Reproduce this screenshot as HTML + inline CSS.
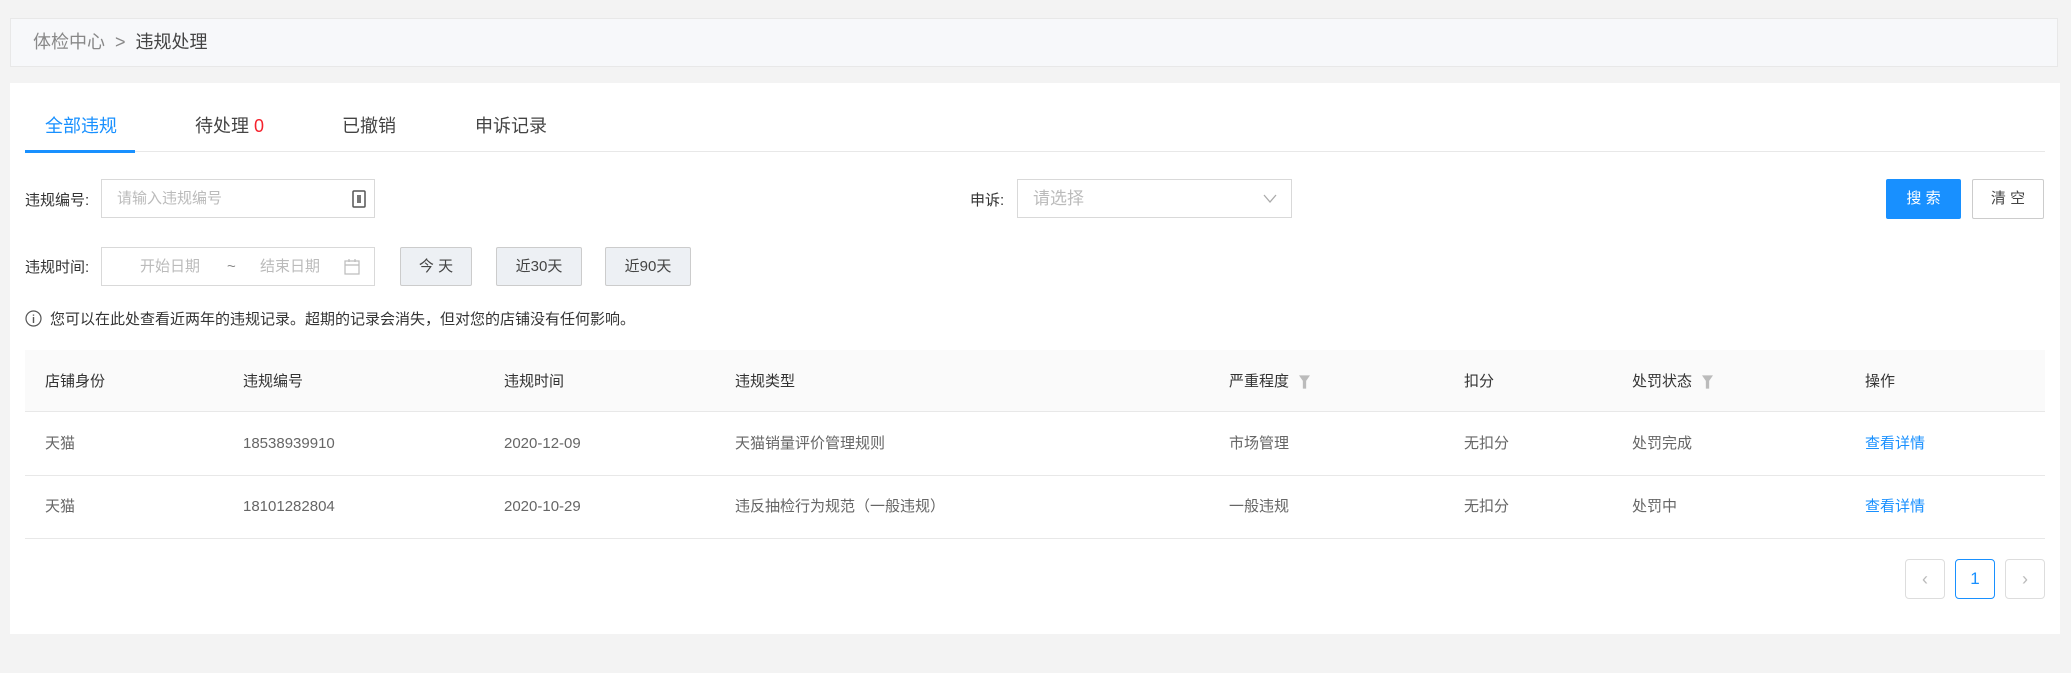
<!DOCTYPE html>
<html><head><meta charset="utf-8"><style>
*{box-sizing:border-box;margin:0;padding:0}
body{width:2071px;height:673px;background:#f3f3f3;font-family:"Liberation Sans","Noto Sans CJK SC",sans-serif;color:#333;position:relative;overflow:hidden;font-size:15px}
.a{position:absolute}
.bc{left:10px;top:18px;width:2048px;height:49px;background:#f7f8fa;border:1px solid #e8e8e8;font-size:18px;line-height:47px;padding-left:22px;color:#888}
.bc b{font-weight:normal;color:#444}
.panel{left:10px;top:83px;width:2050px;height:551px;background:#fff}
.tab{top:114px;font-size:18px;color:#444;line-height:24px}
.inp{border:1px solid #d9d9d9;height:39px;background:#fff;color:#bbb;font-size:15px;line-height:37px}
.btn{border:1px solid #ccc;background:#edf0f4;height:39px;line-height:37px;text-align:center;font-size:15px;color:#444;border-radius:2px}
.lbl{font-size:15px;color:#333}
.th{top:350px;left:25px;width:2020px;height:62px;background:#fafafa;border-bottom:1px solid #e8e8e8}
.line{left:25px;width:2020px;height:1px;background:#e8e8e8}
.c{font-size:15px;color:#666;line-height:20px}
.h{color:#333}
.pg{width:40px;height:40px;border:1px solid #ddd;border-radius:4px;top:559px;text-align:center;line-height:38px;color:#bbb;font-size:18px}
.flt{display:inline-block;width:11px;height:14px;margin-left:10px;vertical-align:-3px}
</style></head><body>
<div class="a bc">体检中心 &nbsp;&gt;&nbsp; <b>违规处理</b></div>
<div class="a panel"></div>
<div class="a tab" style="left:45px;color:#1890ff">全部违规</div>
<div class="a tab" style="left:195px">待处理 <span style="color:#f5222d">0</span></div>
<div class="a tab" style="left:342px">已撤销</div>
<div class="a tab" style="left:475px">申诉记录</div>
<div class="a" style="left:25px;top:151px;width:2020px;height:1px;background:#e8e8e8"></div>
<div class="a" style="left:25px;top:150px;width:110px;height:3px;background:#1890ff"></div>

<div class="a lbl" style="left:25px;top:189px">违规编号:</div>
<div class="a inp" style="left:101px;top:179px;width:274px;padding-left:15px">请输入违规编号
<svg class="a" style="right:8px;top:10px" width="14" height="18" viewBox="0 0 14 18"><rect x="1" y="1" width="12" height="16" rx="1" fill="none" stroke="#555" stroke-width="1.5"/><rect x="5" y="5" width="4" height="8" fill="#777"/></svg></div>
<div class="a lbl" style="left:970px;top:189px">申诉:</div>
<div class="a inp" style="left:1017px;top:179px;width:275px;padding-left:15px;font-size:17px">请选择
<svg class="a" style="right:14px;top:14px" width="14" height="10" viewBox="0 0 14 10"><path d="M1 1 L7 8 L13 1" fill="none" stroke="#aaa" stroke-width="1.3"/></svg></div>
<div class="a" style="left:1886px;top:179px;width:75px;height:40px;background:#1890ff;color:#fff;border-radius:2px;text-align:center;line-height:40px;font-size:15px">搜 索</div>
<div class="a" style="left:1972px;top:179px;width:72px;height:40px;border:1px solid #ccc;color:#444;border-radius:2px;text-align:center;line-height:38px;font-size:15px">清 空</div>

<div class="a lbl" style="left:25px;top:256px">违规时间:</div>
<div class="a inp" style="left:101px;top:247px;width:274px">
<span class="a" style="left:38px">开始日期</span><span class="a" style="left:125px;color:#888">~</span><span class="a" style="left:158px">结束日期</span>
<svg class="a" style="right:14px;top:10px" width="16" height="17" viewBox="0 0 16 17"><rect x="1" y="3" width="14" height="13" fill="none" stroke="#bbb" stroke-width="1.2"/><path d="M1 7H15M5 1V4M11 1V4" stroke="#bbb" stroke-width="1.2"/></svg></div>
<div class="a btn" style="left:400px;top:247px;width:72px">今 天</div>
<div class="a btn" style="left:496px;top:247px;width:86px">近30天</div>
<div class="a btn" style="left:605px;top:247px;width:86px">近90天</div>

<svg class="a" style="left:25px;top:310px" width="17" height="17" viewBox="0 0 17 17"><circle cx="8.5" cy="8.5" r="7.5" fill="none" stroke="#555" stroke-width="1.2"/><path d="M8.5 7V13M8.5 4.5V5.7" stroke="#555" stroke-width="1.4"/></svg>
<div class="a lbl" style="left:50px;top:308px">您可以在此处查看近两年的违规记录。超期的记录会消失，但对您的店铺没有任何影响。</div>

<div class="a th"></div>
<div class="a c h" style="top:372px;left:45px">店铺身份</div>
<div class="a c h" style="top:372px;left:243px">违规编号</div>
<div class="a c h" style="top:372px;left:504px">违规时间</div>
<div class="a c h" style="top:372px;left:735px">违规类型</div>
<div class="a c h" style="top:372px;left:1229px">严重程度<svg class="flt" viewBox="0 0 10 12"><path d="M0 0H10L6.5 5V12H3.5V5Z" fill="#bbb"/></svg></div>
<div class="a c h" style="top:372px;left:1464px">扣分</div>
<div class="a c h" style="top:372px;left:1632px">处罚状态<svg class="flt" viewBox="0 0 10 12"><path d="M0 0H10L6.5 5V12H3.5V5Z" fill="#bbb"/></svg></div>
<div class="a c h" style="top:372px;left:1865px">操作</div>

<div class="a c" style="top:434px;left:45px">天猫</div>
<div class="a c" style="top:434px;left:243px">18538939910</div>
<div class="a c" style="top:434px;left:504px">2020-12-09</div>
<div class="a c" style="top:434px;left:735px">天猫销量评价管理规则</div>
<div class="a c" style="top:434px;left:1229px">市场管理</div>
<div class="a c" style="top:434px;left:1464px">无扣分</div>
<div class="a c" style="top:434px;left:1632px">处罚完成</div>
<div class="a c" style="top:434px;left:1865px;color:#1890ff">查看详情</div>
<div class="a line" style="top:475px"></div>

<div class="a c" style="top:497px;left:45px">天猫</div>
<div class="a c" style="top:497px;left:243px">18101282804</div>
<div class="a c" style="top:497px;left:504px">2020-10-29</div>
<div class="a c" style="top:497px;left:735px">违反抽检行为规范（一般违规）</div>
<div class="a c" style="top:497px;left:1229px">一般违规</div>
<div class="a c" style="top:497px;left:1464px">无扣分</div>
<div class="a c" style="top:497px;left:1632px">处罚中</div>
<div class="a c" style="top:497px;left:1865px;color:#1890ff">查看详情</div>
<div class="a line" style="top:538px"></div>

<div class="a pg" style="left:1905px">‹</div>
<div class="a pg" style="left:1955px;border-color:#1890ff;color:#1890ff;font-size:17px">1</div>
<div class="a pg" style="left:2005px">›</div>
</body></html>
